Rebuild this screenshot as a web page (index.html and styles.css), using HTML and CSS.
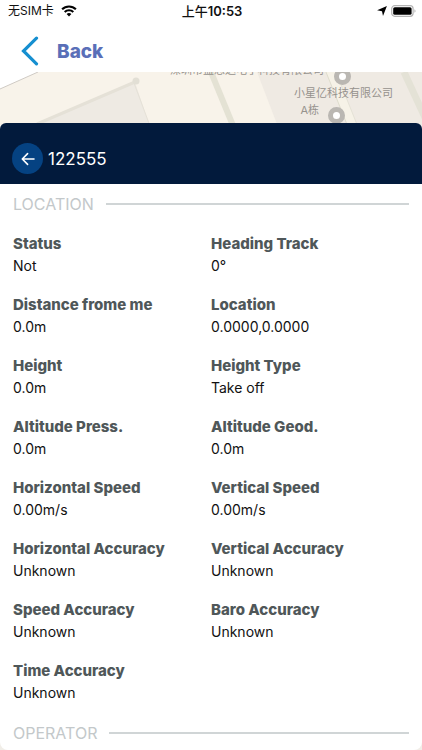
FILE: index.html
```html
<!DOCTYPE html>
<html lang="en">
<head>
  <meta charset="UTF-8">
  <meta name="viewport" content="width=device-width, initial-scale=1">
  <title>122555</title>
  <link rel="stylesheet" href="styles.css">
</head>
<body>

  <div class="status-bar">
    <div class="carrier">
      <span>无SIM卡</span>
      <svg width="16" height="12" viewBox="0 0 16 12" aria-hidden="true">
        <path d="M8 11.6 5.6 9.1a3.4 3.4 0 0 1 4.8 0z" fill="#000"/>
        <path d="M3.7 7a6.1 6.1 0 0 1 8.6 0M1.1 4.3a9.8 9.8 0 0 1 13.8 0" fill="none" stroke="#000" stroke-width="2.1"/>
      </svg>
    </div>
    <div class="time"><span class="period">上午</span>10:53</div>
    <div class="indicators">
      <svg width="10" height="10" viewBox="0 0 10 10" aria-hidden="true">
        <path d="M9.9.1 6 9.9 5 5.2.1 4.2z" fill="#000"/>
      </svg>
      <svg width="25" height="12" viewBox="0 0 25 12" aria-hidden="true">
        <rect x=".7" y=".7" width="21.4" height="10.6" rx="3" fill="#fff" stroke="#b4b4b4" stroke-width="1.2"/>
        <rect x="2.2" y="2.2" width="18.4" height="7.6" rx="1.6" fill="#000"/>
        <path d="M23.5 4.2c1.3.6 1.3 3 0 3.6z" fill="#aaa"/>
      </svg>
    </div>
  </div>

  <header class="navbar">
    <a href="#" class="back-link">
      <svg width="18" height="30" viewBox="0 0 18 30" aria-hidden="true">
        <path d="M15.5 2.2 2.5 15l13 12.8" fill="none" stroke="#168fd0" stroke-width="3.2" stroke-linecap="round"/>
      </svg>
      <span>Back</span>
    </a>
  </header>

  <div class="map">
    <svg width="100%" height="68" viewBox="0 0 422 68" preserveAspectRatio="none" aria-hidden="true">
      <rect width="422" height="68" fill="#f8f3ea"/>
      <path d="M0 0h38L0 17z" fill="#fff"/>
      <path d="M38 0 0 17" stroke="#cfcac4"/>
      <path d="M40 52 135 10l16 48H40z" fill="#eeeae3"/>
      <path d="M37 52 135 10" stroke="#e5e1d7" stroke-width="3"/>
      <path d="m134 11 16 43" stroke="#e5e1d7"/>
      <circle cx="136" cy="9" r="3.5" fill="#e2dfd5"/>
      <path d="M257 0h165v60H280z" fill="#efeae3"/>
      <path d="m211 0 23 56" stroke="#e4e2d4" stroke-width="6"/>
      <path d="M326 0h10l24 60h-10z" fill="#f6f2e7"/>
      <path d="m326 0 24 60" stroke="#dedccd"/>
      <path d="m336 0 24 60" stroke="#e4e1d5"/>
      <path d="m404 0 24 52" stroke="#e4e2d6" stroke-width="7"/>
    </svg>
    <span class="place place-top">深圳市盛思达电子科技有限公司</span>
    <span class="place place-company">小星亿科技有限公司</span>
    <span class="place place-block">A栋</span>
    <i class="pin pin-top"></i>
    <i class="pin pin-block"></i>
  </div>

  <main class="panel">
    <div class="panel-header">
      <button type="button" class="round-back" aria-label="Go back">
        <svg width="14" height="14" viewBox="0 0 14 14" aria-hidden="true">
          <path d="M13 7H1.5M6.6 1.6 1.3 7l5.3 5.4" fill="none" stroke="#fff" stroke-width="1.6" stroke-linecap="round" stroke-linejoin="round"/>
        </svg>
      </button>
      <h1>122555</h1>
    </div>

    <div class="panel-body">
      <h2 class="section-title">LOCATION</h2>
      <dl class="fields">
        <div><dt>Status</dt><dd>Not</dd></div>
        <div><dt>Heading Track</dt><dd>0°</dd></div>
        <div><dt>Distance frome me</dt><dd>0.0m</dd></div>
        <div><dt>Location</dt><dd>0.0000,0.0000</dd></div>
        <div><dt>Height</dt><dd>0.0m</dd></div>
        <div><dt>Height Type</dt><dd>Take off</dd></div>
        <div><dt>Altitude Press.</dt><dd>0.0m</dd></div>
        <div><dt>Altitude Geod.</dt><dd>0.0m</dd></div>
        <div><dt>Horizontal Speed</dt><dd>0.00m/s</dd></div>
        <div><dt>Vertical Speed</dt><dd>0.00m/s</dd></div>
        <div><dt>Horizontal Accuracy</dt><dd>Unknown</dd></div>
        <div><dt>Vertical Accuracy</dt><dd>Unknown</dd></div>
        <div><dt>Speed Accuracy</dt><dd>Unknown</dd></div>
        <div><dt>Baro Accuracy</dt><dd>Unknown</dd></div>
        <div><dt>Time Accuracy</dt><dd>Unknown</dd></div>
      </dl>
      <h2 class="section-title">OPERATOR</h2>
    </div>
  </main>

</body>
</html>
```
FILE: styles.css
```css
* {
  box-sizing: border-box;
}
body {
  margin: 0;
  background: #f1eee8;
  font-family: Inter, "Noto Sans CJK SC", sans-serif;
  color: #111;
}
h1, h2, dl, dd {
  margin: 0;
}
svg {
  display: block;
}

/* status bar */
.status-bar {
  display: grid;
  grid-template-columns: 1fr auto 1fr;
  align-items: center;
  height: 22px;
  padding: 0 6px 0 8px;
  background: #fff;
  font-size: 12px;
  line-height: 22px;
}
.carrier {
  display: flex;
  align-items: center;
  gap: 7px;
}
.time {
  font-size: 13px;
  font-weight: 600;
}
.period {
  font-weight: 500;
}
.indicators {
  display: flex;
  align-items: center;
  justify-content: flex-end;
  gap: 4px;
}

.navbar {
  height: 50px;
  padding: 0 21px;
  background: #fff;
}
.back-link {
  display: inline-flex;
  align-items: center;
  gap: 18px;
  height: 58px;
  color: #5a6fb8;
  font-size: 19px;
  font-weight: 800;
  text-decoration: none;
}

/* map strip, the panel slides over its lower edge */
.map {
  position: relative;
  height: 68px;
  overflow: hidden;
}
.place {
  position: absolute;
  color: #96928d;
  font-size: 11px;
  line-height: 16px;
  white-space: nowrap;
}
.place-top {
  top: -10px;
  right: 98px;
}
.place-company {
  top: 13px;
  right: 29px;
}
.place-block {
  top: 30px;
  right: 103px;
}
.pin {
  position: absolute;
  width: 17px;
  height: 17px;
  border: 5px solid #bab7b2;
  border-radius: 50%;
  background: #fff;
}
.pin-top {
  top: -4px;
  right: 71px;
}
.pin-block {
  top: 35px;
  right: 77px;
}

.panel {
  position: relative;
  margin-top: -17px;
  border-radius: 6px 6px 8px 8px;
  background: #fff;
  overflow: hidden;
}
.panel-header {
  display: flex;
  align-items: center;
  gap: 5px;
  padding: 20px 12px 10px;
  background: #021a3c;
}
.round-back {
  display: grid;
  place-items: center;
  width: 31px;
  height: 31px;
  padding: 0;
  border: none;
  border-radius: 50%;
  background: #054282;
  cursor: pointer;
}
.panel-header h1 {
  color: #fff;
  font-size: 17px;
  font-weight: 400;
  line-height: 24px;
}
.panel-body {
  padding: 9px 13px 6px;
}
.section-title {
  display: flex;
  align-items: center;
  gap: 12px;
  color: #c3c8ca;
  font-size: 16px;
  font-weight: 400;
  line-height: 22px;
}
.section-title::after {
  content: "";
  flex: 1;
  height: 2px;
  background: #d0d5d6;
}

.fields {
  display: grid;
  grid-template-columns: 1fr 1fr;
  row-gap: 17px;
  padding: 18px 0;
}
.fields dt {
  color: #4f5759;
  font-size: 15px;
  font-weight: 800;
  line-height: 22px;
}
.fields dd {
  font-size: 14px;
  line-height: 22px;
}
```
